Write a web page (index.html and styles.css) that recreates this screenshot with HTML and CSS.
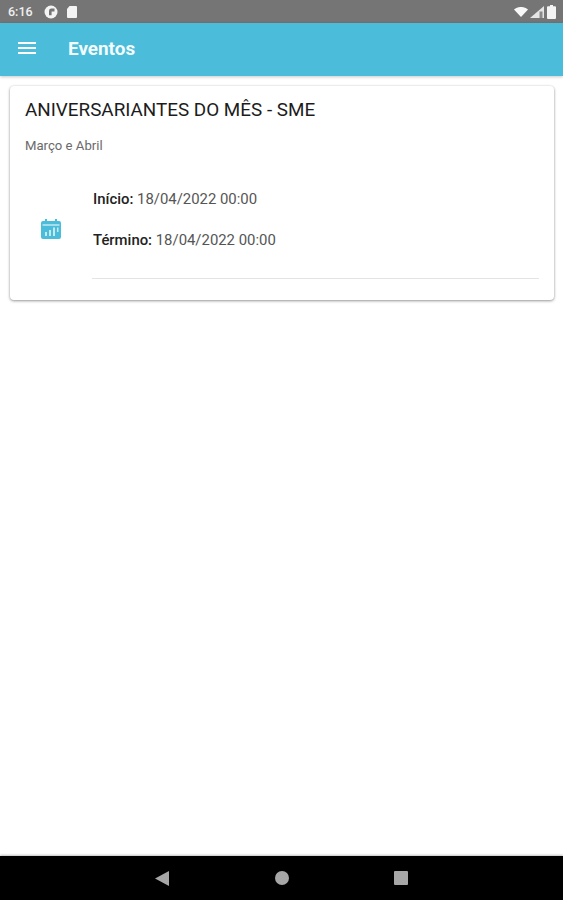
FILE: index.html
```html
<!DOCTYPE html>
<html lang="pt">
<head>
<meta charset="utf-8">
<title>Eventos</title>
<link rel="stylesheet" href="styles.css">
</head>
<body>
<div class="screen">
  <div class="statusbar">
    <div class="status-left">
      <span class="time">6:16</span>
      <svg class="ic-p" viewBox="0 0 14 14"><circle cx="7" cy="7" r="6.500" fill="#f4f4f4"/><path d="M7 3.500h3.500v3H7.600v3.800H5V6a2.500 2.500 0 0 1 2-2.500z" fill="#757575"/></svg>
      <svg class="ic-sd" viewBox="0 0 10 12"><path d="M2.500 0H9a1 1 0 0 1 1 1v10a1 1 0 0 1-1 1H1a1 1 0 0 1-1-1V3z" fill="#f4f4f4"/></svg>
    </div>
    <div class="status-right">
      <svg class="ic-wifi" viewBox="0 0 14 10"><path d="M0 2.600C4-.9 10-.9 14 2.600L7 10z" fill="#f8f8f8"/></svg>
      <svg class="ic-signal" viewBox="0 0 14 12"><path d="M14 0v12H0z" fill="#e4e4e4"/><path d="M9.500 12V5.500h3V12z" fill="#8a8a8a"/></svg>
      <svg class="ic-batt" viewBox="0 0 9 14"><path d="M3 0h3v1.300h2a1 1 0 0 1 1 1V13a1 1 0 0 1-1 1H1a1 1 0 0 1-1-1V2.300a1 1 0 0 1 1-1h2z" fill="#f4f4f4"/></svg>
    </div>
  </div>
  <header class="appbar">
    <svg class="ic-menu" viewBox="0 0 18 12"><path d="M0 0h18v2H0zM0 5h18v2H0zM0 10h18v2H0z" fill="#fff"/></svg>
    <h1 class="appbar-title">Eventos</h1>
  </header>
  <main class="content">
    <section class="card">
      <h2 class="card-title">ANIVERSARIANTES DO MÊS - SME</h2>
      <p class="card-sub">Março e Abril</p>
      <div class="event-row">
        <div class="event-icon">
          <svg class="ic-cal" viewBox="0 0 20 20"><path d="M4 0h2v2h8V0h2v2h2a2 2 0 0 1 2 2v14a2 2 0 0 1-2 2H2a2 2 0 0 1-2-2V4a2 2 0 0 1 2-2h2zM1.500 5.500v1h17v-1z" fill="#4bbcd9" fill-rule="evenodd"/><path d="M4 13h2v4H4zM8 11h2v6H8zM12 8.500h2V17h-2zM16 8.500h1.500V13H16z" fill="#c4ebf4"/></svg>
        </div>
        <div class="event-body">
          <p class="event-line"><b>Início:</b> 18/04/2022 00:00</p>
          <p class="event-line"><b>Término:</b> 18/04/2022 00:00</p>
          <div class="divider"></div>
        </div>
      </div>
    </section>
  </main>
  <nav class="navbar">
    <svg class="ic-back" viewBox="0 0 14 15"><path d="M14 0v15L0 7.500z" fill="#a6a6a6"/></svg>
    <span class="ic-home"></span>
    <span class="ic-recent"></span>
  </nav>
</div>
</body>
</html>
```

FILE: styles.css
```css
* { box-sizing: border-box; }
html, body { margin: 0; padding: 0; }
body { font-family: Roboto, "Liberation Sans", sans-serif; background: #fff; }
.screen { width: 563px; height: 900px; display: flex; flex-direction: column; overflow: hidden; }

.statusbar {
  height: 23px; flex: none; background: #757575;
  display: flex; justify-content: space-between; align-items: center;
  padding: 0 7px 0 8px;
}
.status-left { display: flex; align-items: center; }
.time { font-size: 12.500px; font-weight: 500; color: #f0f0f0; width: 36px; }
.ic-p { width: 14px; height: 14px; margin-right: 9px; }
.ic-sd { width: 10px; height: 12px; }
.status-right { display: flex; align-items: center; gap: 2px; }
.ic-wifi { width: 14px; height: 10px; }
.ic-signal { width: 14px; height: 12px; }
.ic-batt { width: 9px; height: 14px; margin-left: 1px; }

.appbar {
  height: 53px; flex: none; background: #4bbcd9;
  display: flex; align-items: center; padding: 0 0 3px 18px;
  box-shadow: 0 1px 3px rgba(0,0,0,.22);
  position: relative;
}
.ic-menu { width: 18px; height: 12px; margin-right: 32px; }
.appbar-title { margin: 0; font-size: 18.900px; font-weight: 700; color: #f2fbfd; }

.content { flex: 1; padding: 10px 9px 0 10px; background: #fff; }
.card {
  height: 214px; background: #fff; border-radius: 4px;
  box-shadow: 0 1px 3px rgba(0,0,0,.4), 0 0 2px rgba(0,0,0,.08);
  padding: 13px 15px 0;
}
.card-title { margin: 0; font-size: 18.850px; line-height: 22px; font-weight: 400; color: #1c1c1c; }
.card-sub { margin: 17px 0 0; font-size: 13.150px; line-height: 16px; color: #6a6a6a; }
.event-row { display: flex; align-items: flex-start; margin-top: 36px; }
.event-icon { width: 68px; flex: none; padding: 29px 0 0 16px; display: flex; }
.ic-cal { width: 20px; height: 20px; }
.event-body { flex: 1; }
.event-line { margin: 0 0 22px; font-size: 14.900px; line-height: 19px; color: #555; }
.event-line b { font-weight: 500; color: #222; }
.divider { height: 1px; background: #e4e4e4; margin: 28px 0 0 -1px; }

.navbar { height: 44px; flex: none; background: #000; display: flex; align-items: center; padding: 0 155px; justify-content: space-between; box-shadow: 0 -1px 2px rgba(0,0,0,.25); }
.ic-back { width: 14px; height: 15px; }
.ic-home { width: 14px; height: 14px; border-radius: 50%; background: #a6a6a6; }
.ic-recent { width: 14px; height: 14px; border-radius: 1px; background: #a6a6a6; }
```
